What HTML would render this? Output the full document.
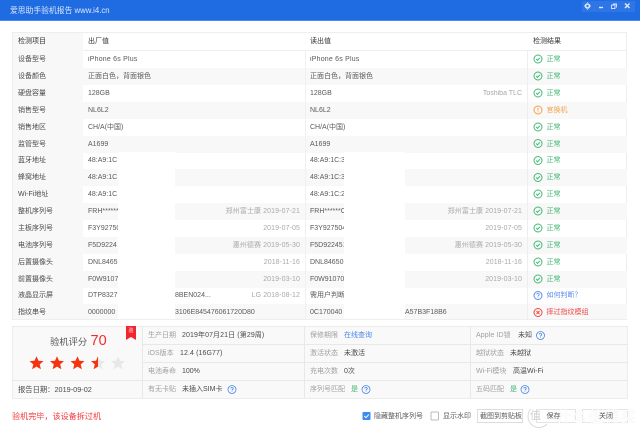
<!DOCTYPE html>
<html lang="zh"><head><meta charset="utf-8"><title>爱思助手验机报告</title>
<style>
html,body{margin:0;padding:0;background:#fff}
#p{position:relative;width:640px;height:436px;overflow:hidden;background:#fff;font:7px/17px "Liberation Sans","Noto Sans CJK SC",sans-serif;color:#555}
#p div{position:absolute;white-space:nowrap}
.t{filter:blur(.35px)}
.r{left:13px;width:614px;height:17px}
.g{background:#f8f8f8}
.lb{color:#a0a0a0}
</style></head><body><div id="p">

<div style="left:0;top:0;width:640px;height:20px;background:#1f6be2;border-bottom:1px solid #4d8cec"></div>
<div class="t" style="left:10px;top:2px;color:#dce8fb;font-size:7.8px">爱思助手验机报告 www.i4.cn</div>
<div style="left:582px;top:1px;width:53px;height:11px;background:#2e76e5"></div>
<svg style="position:absolute;left:582px;top:0" width="54" height="12" fill="none" stroke="#dce8fb">
<circle cx="5.5" cy="6" r="2" stroke-width="1.6"/><path d="M5.5 3V2.4M5.5 9.6V9M2.5 6H2M9 6h-.5" stroke-width="1"/>
<path d="M17 7.500h4" stroke-width="1.400"/>
<rect x="29.500" y="5" width="3.500" height="3.500" stroke-width=".9"/><path d="M31 4h3.500v3.500" stroke-width=".9"/>
<path d="M43 3.500l4.500 4.500M47.500 3.500L43 8" stroke-width="1.500"/></svg>

<div style="left:12px;top:32px;width:615px;height:288px;border:1px solid #eee;box-sizing:border-box"></div>
<div style="left:13px;top:50px;width:614px;height:1px;background:#eee"></div>

<div class="r g" style="top:67.500px"></div>
<div class="r g" style="top:101.500px"></div>
<div class="r g" style="top:135.500px"></div>
<div class="r g" style="top:169px"></div>
<div class="r g" style="top:203px"></div>
<div class="r g" style="top:237px"></div>
<div class="r g" style="top:271px"></div>
<div class="r g" style="top:304px;height:15px"></div>

<div style="left:13px;top:33px;width:70px;height:286px;background:#f8f8f8"></div>
<div style="left:305px;top:50px;width:1px;height:269px;background:#f0f0f0"></div>
<div style="left:527px;top:50px;width:1px;height:269px;background:#eee"></div>

<div class="t" style="left:0;top:0;width:640px;height:330px;color:#333">
<div style="left:18px;top:33px">检测项目</div>
<div style="left:88px;top:33px">出厂值</div>
<div style="left:310px;top:33px">读出值</div>
<div style="left:533px;top:33px">检测结果</div>
</div>

<div class="t" style="left:18px;top:0;width:60px;height:330px;color:#4a4a4a">
<div style="left:0;top:50.500px">设备型号</div>
<div style="left:0;top:67.500px">设备颜色</div>
<div style="left:0;top:84.500px">硬盘容量</div>
<div style="left:0;top:101.500px">销售型号</div>
<div style="left:0;top:118.500px">销售地区</div>
<div style="left:0;top:135.500px">监管型号</div>
<div style="left:0;top:152px">蓝牙地址</div>
<div style="left:0;top:169px">蜂窝地址</div>
<div style="left:0;top:186px">Wi-Fi地址</div>
<div style="left:0;top:202.500px">整机序列号</div>
<div style="left:0;top:219.500px">主板序列号</div>
<div style="left:0;top:236.500px">电池序列号</div>
<div style="left:0;top:253.500px">后置摄像头</div>
<div style="left:0;top:270.500px">前置摄像头</div>
<div style="left:0;top:287px">液晶显示屏</div>
<div style="left:0;top:304px">指纹串号</div>
</div>

<div class="t" style="left:88px;top:0;width:220px;height:330px;color:#5a5a5a">
<div style="left:0;top:50.500px;letter-spacing:.2px">iPhone 6s Plus</div>
<div style="left:0;top:67.500px">正面白色，背面银色</div>
<div style="left:0;top:84.500px">128GB</div>
<div style="left:0;top:101.500px">NL6L2</div>
<div style="left:0;top:118.500px">CH/A(中国)</div>
<div style="left:0;top:135.500px">A1699</div>
<div style="left:0;top:152px">48:A9:1C</div>
<div style="left:0;top:169px">48:A9:1C</div>
<div style="left:0;top:186px">48:A9:1C</div>
<div style="left:0;top:202.500px">FRH******</div>
<div style="left:0;top:219.500px">F3Y92750</div>
<div style="left:0;top:236.500px">F5D9224</div>
<div style="left:0;top:253.500px">DNL8465</div>
<div style="left:0;top:270.500px">F0W9107</div>
<div style="left:0;top:287px">DTP8327</div>
<div style="left:0;top:304px">0000000</div>
</div>

<div class="t" style="left:310px;top:0;width:220px;height:330px;color:#5a5a5a">
<div style="left:0;top:50.500px;letter-spacing:.2px">iPhone 6s Plus</div>
<div style="left:0;top:67.500px">正面白色，背面银色</div>
<div style="left:0;top:84.500px">128GB</div>
<div style="left:0;top:101.500px">NL6L2</div>
<div style="left:0;top:118.500px">CH/A(中国)</div>
<div style="left:0;top:135.500px">A1699</div>
<div style="left:0;top:152px">48:A9:1C:3</div>
<div style="left:0;top:169px">48:A9:1C:3</div>
<div style="left:0;top:186px">48:A9:1C:2</div>
<div style="left:0;top:202.500px">FRH******C</div>
<div style="left:0;top:219.500px">F3Y927504</div>
<div style="left:0;top:236.500px">F5D922451</div>
<div style="left:0;top:253.500px">DNL84650</div>
<div style="left:0;top:270.500px">F0W91070</div>
<div style="left:0;top:287px">需用户判断</div>
<div style="left:0;top:304px">0C170040</div>
</div>

<div style="left:118px;top:152px;width:57px;height:167px;background:#fff"></div>
<div style="left:344px;top:152px;width:61px;height:167px;background:#fff"></div>

<div class="t" style="left:0;top:0;width:640px;height:330px;color:#a8a8a8">
<div style="left:175px;top:287px;color:#5a5a5a">8BEN024...</div>
<div style="left:175px;top:304px;color:#5a5a5a">3106E845476061720D80</div>
<div style="left:405px;top:304px;color:#5a5a5a">A57B3F18B6</div>
<div style="right:118px;top:84.500px">Toshiba TLC</div>
<div style="right:340px;top:202.500px;letter-spacing:.1px">郑州富士康 2019-07-21</div>
<div style="right:340px;top:219.500px;letter-spacing:.1px">2019-07-05</div>
<div style="right:340px;top:236.500px;letter-spacing:.1px">惠州德赛 2019-05-30</div>
<div style="right:340px;top:253.500px;letter-spacing:.1px">2018-11-16</div>
<div style="right:340px;top:270.500px;letter-spacing:.1px">2019-03-10</div>
<div style="right:340px;top:287px;letter-spacing:.1px">LG 2018-08-12</div>
<div style="right:118px;top:202.500px;letter-spacing:.1px">郑州富士康 2019-07-21</div>
<div style="right:118px;top:219.500px;letter-spacing:.1px">2019-07-05</div>
<div style="right:118px;top:236.500px;letter-spacing:.1px">惠州德赛 2019-05-30</div>
<div style="right:118px;top:253.500px;letter-spacing:.1px">2018-11-16</div>
<div style="right:118px;top:270.500px;letter-spacing:.1px">2019-03-10</div>
</div>

<svg style="position:absolute;left:0;top:0" width="640" height="330" fill="none" stroke-width="1">
<defs><g id="ok"><circle cx="0" cy="0" r="4"/><path d="M-1.800 0l1.300 1.400 2.400-2.600"/></g></defs>
<g stroke="#46b978">
<use href="#ok" x="538" y="59"/><use href="#ok" x="538" y="76"/><use href="#ok" x="538" y="93"/>
<use href="#ok" x="538" y="127"/><use href="#ok" x="538" y="143.500"/><use href="#ok" x="538" y="160.500"/>
<use href="#ok" x="538" y="177.500"/><use href="#ok" x="538" y="194"/><use href="#ok" x="538" y="211"/>
<use href="#ok" x="538" y="228"/><use href="#ok" x="538" y="245"/><use href="#ok" x="538" y="262"/>
<use href="#ok" x="538" y="279"/></g>
<g stroke="#f5a04a"><circle cx="538" cy="110" r="4"/><path d="M538 107.800v2.600M538 111.400v.9"/></g>
<g stroke="#5a8cf0"><circle cx="538" cy="295.500" r="4"/><path d="M536.800 294.500a1.200 1.200 0 1 1 1.800 1l-.6.600v.5M538 297.200v.6" stroke-width=".8"/></g>
<g stroke="#f04848"><circle cx="538" cy="312.500" r="4"/><path d="M536.500 311l3 3M539.500 311l-3 3"/></g>
</svg>

<div class="t" style="left:546.500px;top:0;width:90px;height:330px;color:#3fb572">
<div style="left:0;top:50.500px">正常</div>
<div style="left:0;top:67.500px">正常</div>
<div style="left:0;top:84.500px">正常</div>
<div style="left:0;top:101.500px;color:#f5a04a">官换机</div>
<div style="left:0;top:118.500px">正常</div>
<div style="left:0;top:135.500px">正常</div>
<div style="left:0;top:152px">正常</div>
<div style="left:0;top:169px">正常</div>
<div style="left:0;top:186px">正常</div>
<div style="left:0;top:202.500px">正常</div>
<div style="left:0;top:219.500px">正常</div>
<div style="left:0;top:236.500px">正常</div>
<div style="left:0;top:253.500px">正常</div>
<div style="left:0;top:270.500px">正常</div>
<div style="left:0;top:287px;color:#5a8cf0">如何判断？</div>
<div style="left:0;top:304px;color:#f04848">摔过指纹模组</div>
</div>

<div style="left:12px;top:326px;width:615.500px;height:72.500px;background:#f9f9f9;border:1px solid #ececec;box-sizing:border-box"></div>
<div style="left:142px;top:326px;width:1px;height:72px;background:#e8e8e8"></div>
<div style="left:304px;top:326px;width:1px;height:72px;background:#e8e8e8"></div>
<div style="left:470px;top:326px;width:1px;height:72px;background:#e8e8e8"></div>
<div style="left:142px;top:344px;width:485px;height:1px;background:#e8e8e8"></div>
<div style="left:142px;top:362px;width:485px;height:1px;background:#e8e8e8"></div>
<div style="left:12px;top:380px;width:615px;height:1px;background:#e8e8e8"></div>

<svg style="position:absolute;left:126px;top:326px" width="11" height="15"><path d="M0 0h10v14L5 11 0 14z" fill="#f0262c"/></svg>
<div style="left:128.500px;top:327px;font-size:5px;line-height:9px;color:#fde">验</div>

<div class="t" style="left:50px;top:334px;font-size:9.300px;line-height:16px;color:#555">验机评分</div>
<div class="t" style="left:90.500px;top:333px;font-size:14.500px;line-height:17px;color:#f32a2a">70</div>

<svg style="position:absolute;left:28px;top:355px" width="100" height="16">
<defs><path id="st" d="M0-6.800L2 -2.200 7-1.900 3.200 1.400 4.400 6.300 0 3.600-4.400 6.300-3.200 1.400-7-1.900-2-2.200z"/></defs>
<use href="#st" x="8.500" y="8" fill="#f4330f"/><use href="#st" x="29" y="8" fill="#f4330f"/><use href="#st" x="49.500" y="8" fill="#f4330f"/>
<use href="#st" x="70" y="8" fill="#e8e8e8"/>
<path d="M70 1.200L68 5.800 63 6.100 66.800 9.400 65.600 14.300 70 11.600z" fill="#f4330f"/>
<use href="#st" x="90" y="8" fill="#e8e8e8"/></svg>

<div class="t" style="left:18px;top:381px;color:#4a4a4a;font-size:7.300px">报告日期：2019-09-02</div>

<div class="t" style="left:0;top:0;width:640px;height:436px;color:#4a4a4a">
<div class="lb" style="left:148px;top:327px">生产日期</div><div style="left:182px;top:327px;letter-spacing:.1px">2019年07月21日 (第29周)</div>
<div class="lb" style="left:148px;top:345px">iOS版本</div><div style="left:180px;top:345px;letter-spacing:.1px">12.4 (16G77)</div>
<div class="lb" style="left:148px;top:363px">电池寿命</div><div style="left:182px;top:363px">100%</div>
<div class="lb" style="left:148px;top:381px">有无卡贴</div><div style="left:182px;top:381px">未插入SIM卡</div>

<div class="lb" style="left:310px;top:327px">保修期限</div><div style="left:344px;top:327px;color:#4a86e8">在线查询</div>
<div class="lb" style="left:310px;top:345px">激活状态</div><div style="left:344px;top:345px">未激活</div>
<div class="lb" style="left:310px;top:363px">充电次数</div><div style="left:344px;top:363px">0次</div>
<div class="lb" style="left:310px;top:381px">序列号匹配</div><div style="left:351px;top:381px;color:#3fb572">是</div>

<div class="lb" style="left:476px;top:327px;letter-spacing:.1px">Apple ID锁</div><div style="left:518px;top:327px">未知</div>
<div class="lb" style="left:476px;top:345px">越狱状态</div><div style="left:510px;top:345px">未越狱</div>
<div class="lb" style="left:476px;top:363px">Wi-Fi模块</div><div style="left:513px;top:363px">高温Wi-Fi</div>
<div class="lb" style="left:476px;top:381px">五码匹配</div><div style="left:510px;top:381px;color:#3fb572">是</div>
</div>

<svg style="position:absolute;left:0;top:326px" width="640" height="72" fill="none" stroke="#4a86e8" stroke-width=".8">
<circle cx="232" cy="63.500" r="4"/><path d="M230.800 62.500a1.200 1.200 0 1 1 1.800 1l-.6.600v.5M232 65.200v.6"/>
<circle cx="366" cy="63.500" r="4"/><path d="M364.800 62.500a1.200 1.200 0 1 1 1.800 1l-.6.600v.5M366 65.200v.6"/>
<circle cx="525" cy="63.500" r="4"/><path d="M523.800 62.500a1.200 1.200 0 1 1 1.800 1l-.6.600v.5M525 65.200v.6"/>
<circle cx="540.500" cy="9.500" r="4"/><path d="M539.300 8.500a1.200 1.200 0 1 1 1.800 1l-.6.600v.5M540.500 11.200v.6"/>
</svg>

<div class="t" style="left:12px;top:408px;color:#f2393d;font-size:8.100px">验机完毕，该设备拆过机</div>

<svg style="position:absolute;left:360px;top:411px" width="82" height="12">
<rect x="2.500" y="1" width="8" height="8" rx="1" fill="#3d8bef"/><path d="M4.300 5l1.700 1.700 2.800-3.200" stroke="#fff" fill="none"/>
<rect x="71" y="1" width="7.500" height="8" rx="1" fill="#fff" stroke="#bbb"/></svg>
<div class="t" style="left:374px;top:408px;color:#5a5a5a">隐藏整机序列号</div>
<div class="t" style="left:443px;top:408px;color:#5a5a5a">显示水印</div>

<div style="left:477px;top:409px;width:46px;height:14px;border:1px solid #ddd;box-sizing:border-box"></div>
<div style="left:536px;top:409px;width:40px;height:14px;border:1px solid #e4e4e4;box-sizing:border-box"></div>
<div style="left:582px;top:409px;width:46px;height:14px;border:1px solid #e4e4e4;box-sizing:border-box"></div>
<div class="t" style="left:480px;top:408px;color:#5a5a5a">截图到剪贴板</div>

<svg style="position:absolute;left:525px;top:407px" width="26" height="24" fill="none" stroke="#dadada" stroke-width="1"><path d="M6 2A10 10 0 1 0 22 17"/></svg>
<div class="t" style="left:530px;top:408px;font-size:11px;line-height:17px;color:#d0d0d0">值</div>
<div class="t" style="left:556px;top:407px;font-size:15.500px;line-height:22px;color:#fff;text-shadow:0 0 1px #ddd;letter-spacing:.6px">什么值得买</div>
<div class="t" style="left:546.500px;top:408px;color:#555">保存</div>
<div class="t" style="left:599px;top:408px;color:#555">关闭</div>

</div></body></html>
